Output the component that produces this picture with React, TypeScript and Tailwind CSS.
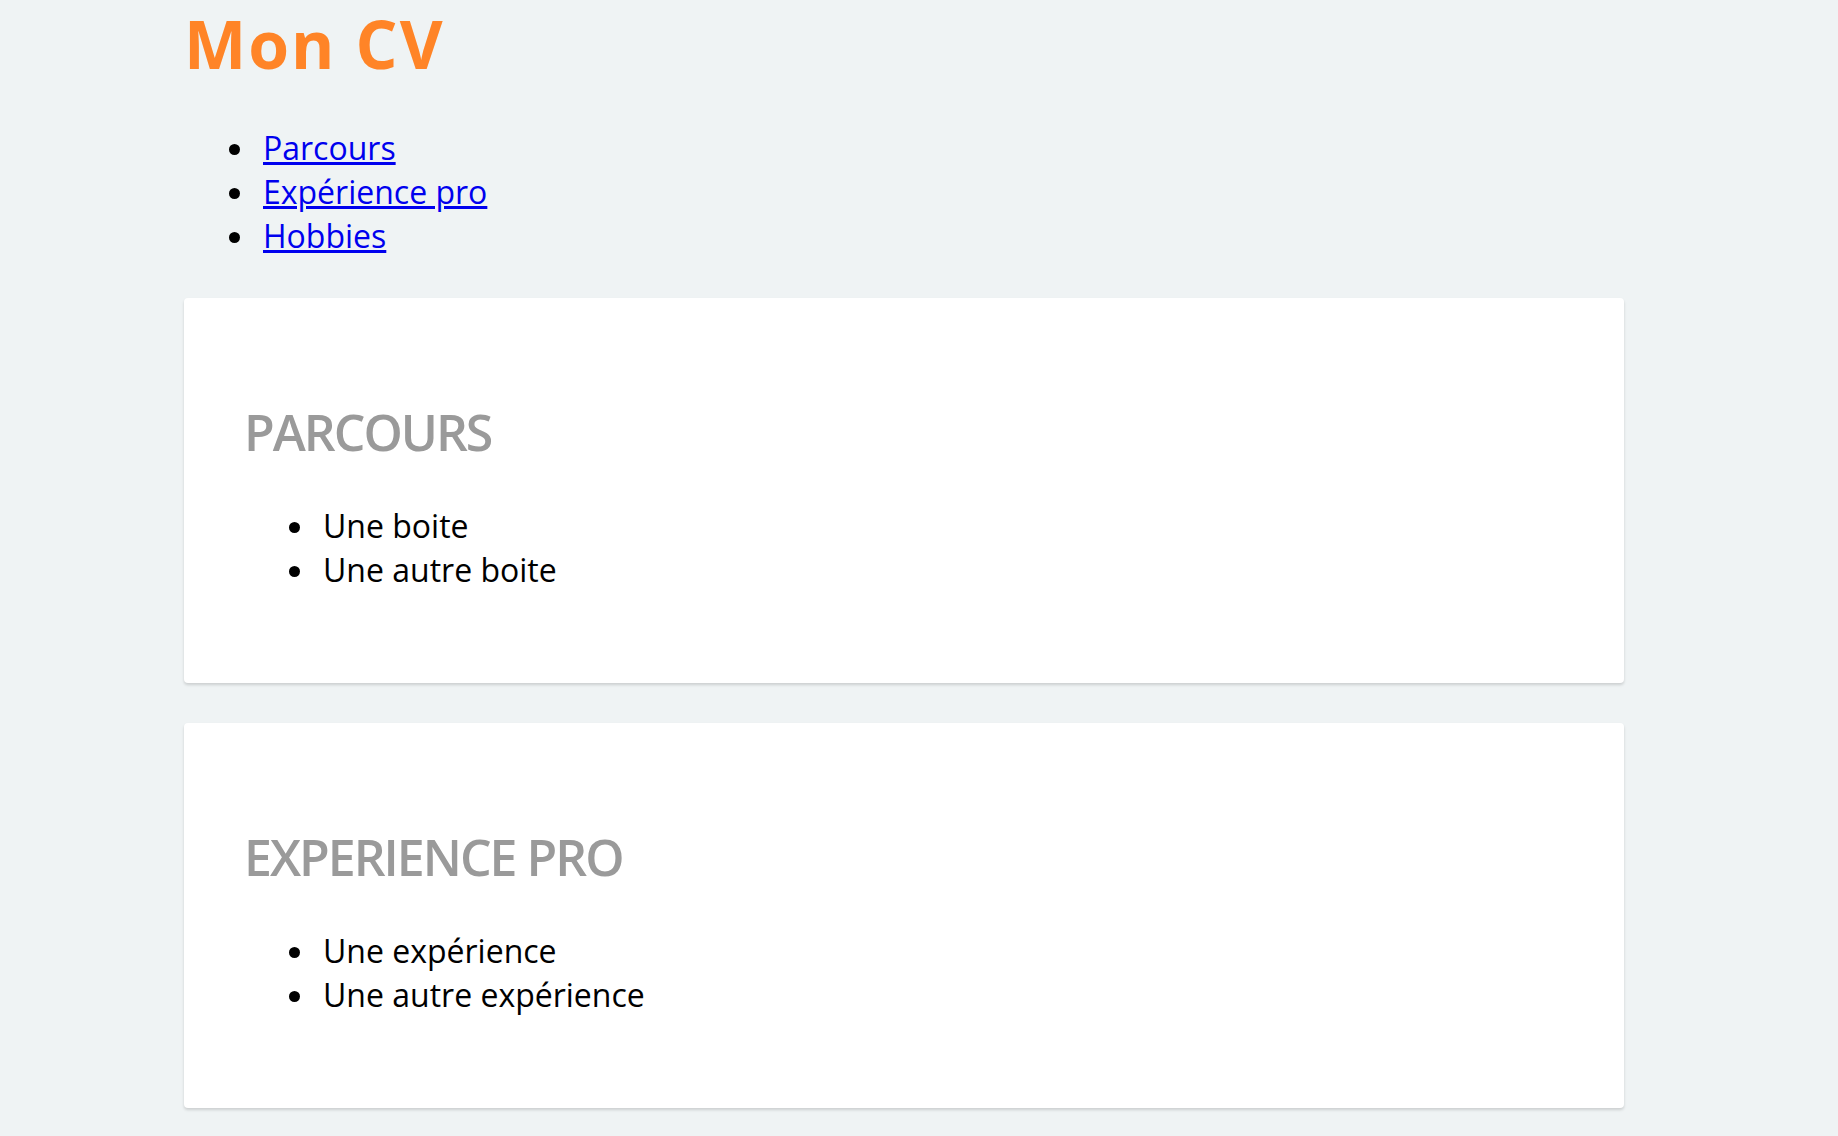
export default function App() {
  const sections = [
    { title: 'PARCOURS', items: ['Une boite', 'Une autre boite'] },
    { title: 'EXPERIENCE PRO', items: ['Une expérience', 'Une autre expérience'] },
  ];

  return (
    <div className="min-h-screen bg-[#eff3f4] font-['Open_Sans','Liberation_Sans',sans-serif] text-black">
      <div className="ml-[184px] w-[1440px] pb-[40px]">
        {/* En-tête */}
        <h1 className="m-0 text-[66px] leading-[87px] font-bold tracking-[2px] text-[#ff8427]">Mon CV</h1>

        {/* Navigation */}
        <ul className="mt-[39px] list-disc pl-[74px] text-[32px] leading-[44px]">
          <li className="pl-[5px]">
            <a href="#parcours" className="text-[#0000ee] underline">Parcours</a>
          </li>
          <li className="pl-[5px]">
            <a href="#experience" className="text-[#0000ee] underline">Expérience pro</a>
          </li>
          <li className="pl-[5px]">
            <a href="#hobbies" className="text-[#0000ee] underline">Hobbies</a>
          </li>
        </ul>

        {/* Sections */}
        <div className="mt-[40px] flex flex-col gap-[40px]">
          {sections.map((s) => (
            <section
              key={s.title}
              className="rounded-[4px] bg-white pl-[60px] pt-[100px] pb-[91px] shadow-[0_2px_3px_rgba(0,0,0,0.15)]"
            >
              <h2 className="m-0 text-[50px] leading-[68px] font-semibold tracking-[-2px] text-[#9a9a9a]">{s.title}</h2>
              <ul className="mt-[38px] list-disc pl-[74px] text-[32px] leading-[44px]">
                {s.items.map((item) => (
                  <li key={item} className="pl-[5px]">{item}</li>
                ))}
              </ul>
            </section>
          ))}
        </div>
      </div>
    </div>
  );
}
